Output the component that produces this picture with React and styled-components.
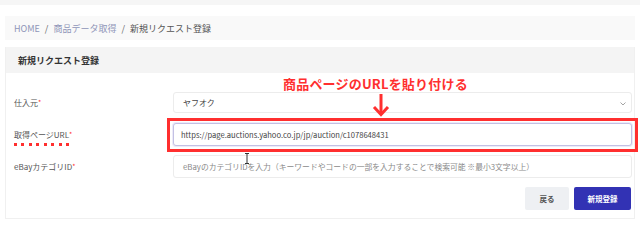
import React from "react";
import styled, { createGlobalStyle } from "styled-components";

const colors = {
  red: "#ff2f2f",
  text: "#444",
  muted: "#8f95b8",
  border: "#ececec",
  indigo: "#3232b4",
};

const GlobalStyle = createGlobalStyle`
  html, body {
    margin: 0;
    padding: 0;
    background: #fff;
    font-family: "Noto Sans CJK JP", "Noto Sans", sans-serif;
    color: ${colors.text};
  }
`;

const Page = styled.div`
  width: 640px;
  height: 242px;
  overflow: hidden;
  padding: 0 5px;
  box-sizing: border-box;
`;

const TopBand = styled.div`
  height: 5px;
  margin: 0 -5px;
  background: #f6f6f6;
`;

const Breadcrumb = styled.nav`
  margin-top: 11px;
  height: 24px;
  background: #f9f9f9;
  display: flex;
  align-items: center;
  gap: 5px;
  padding-left: 9px;
  font-size: 9px;
`;

const Crumb = styled.span`
  color: ${(p) => (p.$current ? "#555" : colors.muted)};
`;

const Sep = styled.span`
  color: #666;
`;

const Card = styled.section`
  margin-top: 7px;
  border: 1px solid #f0f0f0;
  border-top: none;
`;

const CardHeader = styled.h2`
  margin: 0;
  height: 26px;
  background: #f4f4f4;
  display: flex;
  align-items: center;
  padding-left: 12px;
  font-size: 9px;
  font-weight: 700;
  color: #333;
`;

const CardBody = styled.div`
  position: relative;
  padding: 19px 2px 8px 8px;
`;

const Row = styled.div`
  display: grid;
  grid-template-columns: 159px 1fr;
  align-items: center;
  margin-bottom: ${(p) => p.$gap || 9}px;
`;

const Label = styled.label`
  position: relative;
  font-size: 8px;
  color: #555;
`;

const Req = styled.span`
  color: ${colors.red};
  font-size: 7px;
  vertical-align: top;
`;

const DotLine = styled.span`
  position: absolute;
  left: 0;
  top: 14px;
  width: 60px;
  height: 3px;
  background: repeating-linear-gradient(
    90deg,
    ${colors.red} 0 3px,
    transparent 3px 7.5px
  );
`;

const Field = styled.div`
  position: relative;
  height: ${(p) => p.$h || 22}px;
  box-sizing: border-box;
  border: ${(p) => (p.$focus ? "1.5px solid #c3c0e4" : `1px solid ${colors.border}`)};
  border-radius: 3px;
  display: flex;
  align-items: center;
  padding-left: ${(p) => (p.$focus ? 7 : 9)}px;
  font-size: ${(p) => p.$fs || 8}px;
  color: ${(p) => (p.$placeholder ? "#8a8a8a" : "#444")};
  background: #fff;
  white-space: nowrap;
  ${(p) =>
    p.$focus &&
    `
    box-shadow: 0 0 0 1px #ecebf8;
    &::after {
      content: "";
      position: absolute;
      left: -7.5px;
      right: -6.5px;
      top: -6.5px;
      bottom: -6.5px;
      border: 3px solid ${colors.red};
    }
  `}
`;

const Chevron = styled.svg`
  position: absolute;
  right: 5px;
  top: 9px;
`;

const Cursor = styled.svg`
  position: absolute;
  left: 70px;
  top: -3px;
`;

const Annotation = styled.div`
  position: absolute;
  z-index: 2;
  left: 277px;
  top: 1px;
  font-size: 13px;
  font-weight: 700;
  color: ${colors.red};
  white-space: nowrap;
  letter-spacing: 0.2px;
`;

const Arrow = styled.svg`
  position: absolute;
  z-index: 2;
  left: 364px;
  top: 20px;
`;

const Actions = styled.div`
  display: flex;
  justify-content: flex-end;
  gap: 5px;
  padding-right: 1px;
`;

const Button = styled.button`
  height: 23px;
  width: ${(p) => p.$w}px;
  border: none;
  border-radius: 2px;
  font-family: inherit;
  font-size: 7.5px;
  font-weight: 700;
  background: ${(p) => (p.$primary ? colors.indigo : "#eef0f3")};
  color: ${(p) => (p.$primary ? "#fff" : "#555")};
  cursor: pointer;
`;

export default function App() {
  return (
    <>
      <GlobalStyle />
      <Page>
        <TopBand />
        <Breadcrumb>
          <Crumb>HOME</Crumb>
          <Sep>/</Sep>
          <Crumb>商品データ取得</Crumb>
          <Sep>/</Sep>
          <Crumb $current>新規リクエスト登録</Crumb>
        </Breadcrumb>
        <Card>
          <CardHeader>新規リクエスト登録</CardHeader>
          <CardBody>
            <Annotation>商品ページのURLを貼り付ける</Annotation>
            <Arrow width="22" height="24" viewBox="0 0 22 24">
              <path d="M11 1 V20" stroke={colors.red} strokeWidth="3" />
              <path
                d="M4 14 L11 21.5 L18 14"
                stroke={colors.red}
                strokeWidth="3"
                fill="none"
              />
            </Arrow>
            <Row $gap={10}>
              <Label>
                仕入元<Req>*</Req>
              </Label>
              <Field $h={21}>
                ヤフオク
                <Chevron width="6" height="4" viewBox="0 0 6 4">
                  <path d="M0.5 0.5 L3 3 L5.5 0.5" stroke="#999" fill="none" strokeWidth="0.9" />
                </Chevron>
              </Field>
            </Row>
            <Row $gap={9}>
              <Label>
                取得ページURL<Req>*</Req>
                <DotLine />
              </Label>
              <Field $focus $h={23} $fs={7.6}>
                https://page.auctions.yahoo.co.jp/jp/auction/c1078648431
              </Field>
            </Row>
            <Row $gap={9}>
              <Label>
                eBayカテゴリID<Req>*</Req>
              </Label>
              <Field $placeholder $h={23} $fs={7.8}>
                eBayのカテゴリIDを入力（キーワードやコードの一部を入力することで検索可能 ※最小3文字以上）
                <Cursor width="6" height="11" viewBox="0 0 6 11">
                  <path d="M1 0.5 H5 M3 0.5 V10.5 M1 10.5 H5" stroke="#333" strokeWidth="1" fill="none" />
                </Cursor>
              </Field>
            </Row>
            <Actions>
              <Button $w={44}>戻る</Button>
              <Button $w={57} $primary>
                新規登録
              </Button>
            </Actions>
          </CardBody>
        </Card>
      </Page>
    </>
  );
}
